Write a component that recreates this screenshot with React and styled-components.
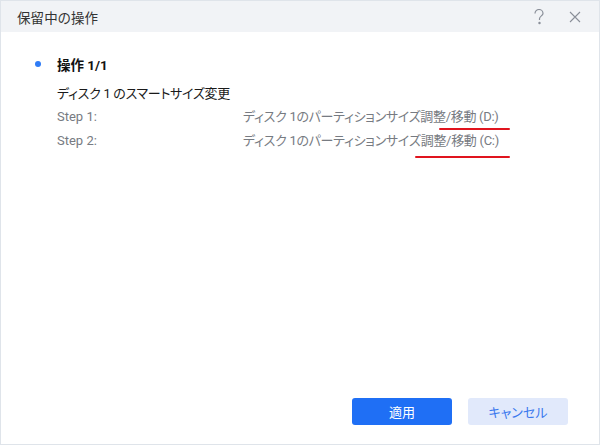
import React from 'react';
import styled, { createGlobalStyle } from 'styled-components';

const GlobalStyle = createGlobalStyle`
  html, body {
    margin: 0;
    padding: 0;
    background: #ffffff;
  }
  body {
    font-family: Roboto, "Noto Sans CJK JP", sans-serif;
    font-feature-settings: "palt";
  }
`;

const Window = styled.div`
  width: 600px;
  height: 445px;
  box-sizing: border-box;
  border: 1px solid #dfe4ea;
  display: flex;
  flex-direction: column;
  background: #ffffff;
`;

const TitleBar = styled.div`
  height: 31px;
  flex-shrink: 0;
  background: #f1f3f6;
  display: flex;
  align-items: center;
  padding: 0 14px 0 16px;
`;

const Title = styled.div`
  flex: 1;
  font-size: 13.5px;
  color: #333333;
  letter-spacing: 0.1px;
`;

const IconButton = styled.button`
  border: none;
  background: transparent;
  padding: 0;
  margin-left: 16px;
  width: 20px;
  height: 20px;
  display: flex;
  align-items: center;
  justify-content: center;
  color: #8a8f99;
  cursor: pointer;
`;

const Body = styled.div`
  flex: 1;
  padding: 23px 0 0 34px;
`;

const Heading = styled.div`
  display: flex;
  align-items: center;
  gap: 16px;
  font-size: 13.5px;
  font-weight: 700;
  color: #111111;
  height: 18px;
`;

const Dot = styled.span`
  width: 6px;
  height: 6px;
  border-radius: 50%;
  background: #2f7cf6;
`;

const Content = styled.div`
  padding-left: 22px;
  margin-top: 10px;
`;

const OperationName = styled.div`
  font-size: 13px;
  color: #1a1a1a;
  height: 22px;
  line-height: 22px;
  letter-spacing: -0.3px;
`;

const StepRow = styled.div`
  display: grid;
  grid-template-columns: 186px auto;
  font-size: 13px;
  color: #777b82;
  height: 24px;
  line-height: 24px;
`;

const Description = styled.span`
  letter-spacing: -0.3px;
`;

const Marked = styled.span`
  position: relative;
  display: inline-block;
`;

const Mark = styled.span`
  position: absolute;
  height: 2px;
  border-radius: 1px;
  background: #e0141e;
  top: ${({ $top }) => $top}px;
  left: 6px;
  right: -11px;
`;

const Footer = styled.div`
  display: flex;
  justify-content: flex-end;
  gap: 16px;
  padding: 0 31px 19px 0;
`;

const Button = styled.button`
  width: 100px;
  height: 27px;
  border: none;
  border-radius: 3px;
  font-family: "Noto Sans CJK JP", sans-serif;
  font-feature-settings: "palt";
  font-size: 13px;
  background: ${({ $primary }) => ($primary ? '#1f6ff5' : '#e1e9fb')};
  color: ${({ $primary }) => ($primary ? '#ffffff' : '#3a78ee')};
  cursor: pointer;
`;

const steps = [
  { label: 'Step 1:', head: 'ディスク 1のパーティションサイズ調', tail: '整/移動 (D:)', top: 23 },
  { label: 'Step 2:', head: 'ディスク 1のパーティションサイ', tail: 'ズ調整/移動 (C:)', top: 27 },
];

export default function App() {
  return (
    <>
      <GlobalStyle />
      <Window>
        <TitleBar>
          <Title>保留中の操作</Title>
          <IconButton aria-label="help">
            <svg width="12" height="16" viewBox="0 0 12 16" fill="none" stroke="currentColor" strokeWidth="1.2">
              <path d="M2 4.5a4 4 0 0 1 8 0c0 2.2-3.5 2.6-3.5 5.2v1.3" />
              <circle cx="6.5" cy="14" r="0.6" fill="currentColor" />
            </svg>
          </IconButton>
          <IconButton aria-label="close">
            <svg width="12" height="12" viewBox="0 0 12 12" stroke="currentColor" strokeWidth="1.1">
              <path d="M1 1l10 10M11 1L1 11" />
            </svg>
          </IconButton>
        </TitleBar>
        <Body>
          <Heading>
            <Dot />
            操作 1/1
          </Heading>
          <Content>
            <OperationName>ディスク 1 のスマートサイズ変更</OperationName>
            {steps.map((s) => (
              <StepRow key={s.label}>
                <span>{s.label}</span>
                <Description>
                  {s.head}
                  <Marked>
                    {s.tail}
                    <Mark $top={s.top} />
                  </Marked>
                </Description>
              </StepRow>
            ))}
          </Content>
        </Body>
        <Footer>
          <Button $primary>適用</Button>
          <Button>キャンセル</Button>
        </Footer>
      </Window>
    </>
  );
}
